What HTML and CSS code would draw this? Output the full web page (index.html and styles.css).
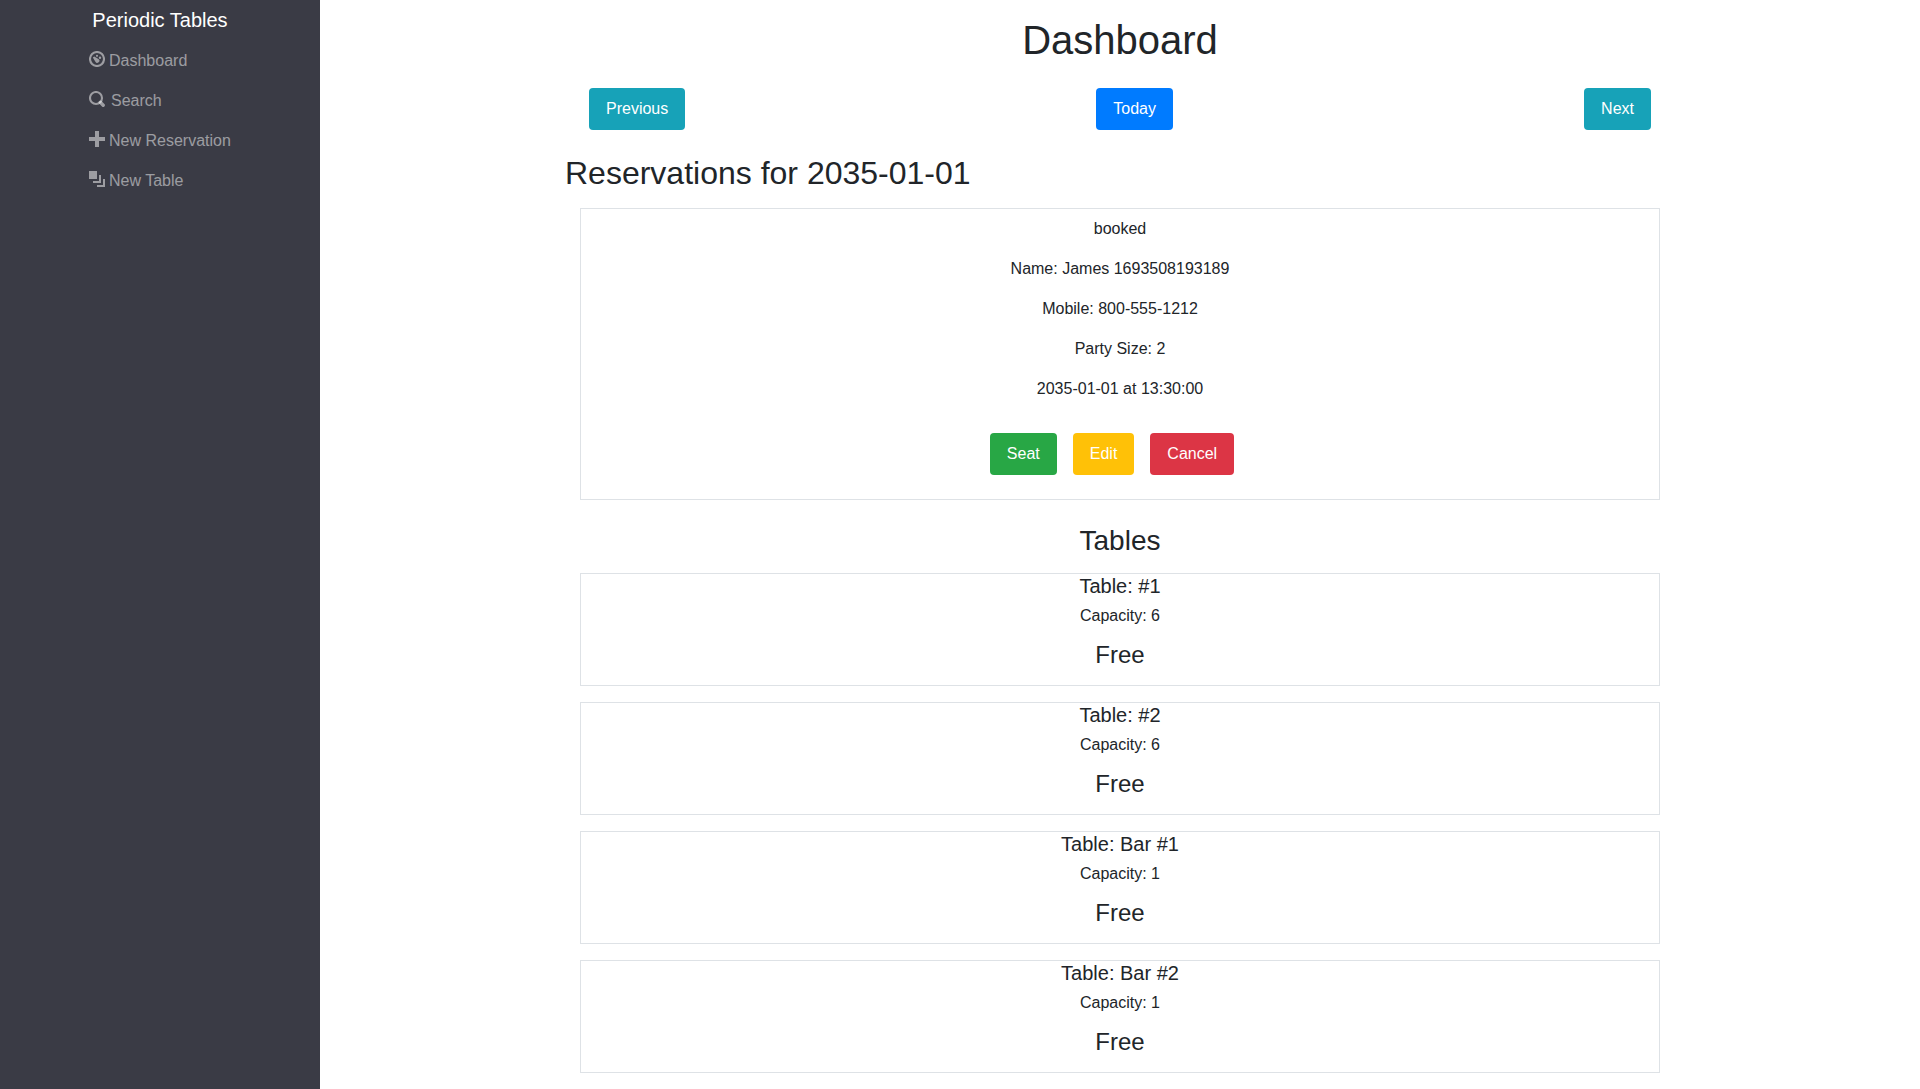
FILE: index.html
```html
<!DOCTYPE html>
<html lang="en">
<head>
<meta charset="utf-8">
<title>Periodic Tables</title>
<link rel="stylesheet" href="styles.css">
</head>
<body>
<div class="layout">
  <nav class="sidebar">
    <div class="brand">Periodic Tables</div>
    <ul class="menu">
      <li><svg class="icon" viewBox="0 0 16 16"><circle cx="8" cy="8" r="7" fill="none" stroke="currentColor" stroke-width="2.1"/><path d="M3.8 6.4l1.4-1 4.2 2.6a2.1 2.1 0 1 1-3 2.8z" fill="currentColor"/><circle cx="8" cy="4.8" r="1.1" fill="currentColor"/><circle cx="11" cy="6.8" r="1.2" fill="currentColor"/></svg><span>Dashboard</span></li>
      <li class="search"><svg class="icon" viewBox="0 0 16 16"><path d="M11.3 11.3l2.9 2.9" stroke="currentColor" stroke-width="3.4" stroke-linecap="round"/><circle cx="7" cy="7" r="6" fill="none" stroke="currentColor" stroke-width="2.1"/></svg><span>Search</span></li>
      <li><svg class="icon" viewBox="0 0 16 16"><path d="M6 0h4v6h6v4h-6v6H6v-6H0V6h6z" fill="currentColor"/></svg><span>New Reservation</span></li>
      <li><svg class="icon" viewBox="0 0 16 16"><path d="M0 0h8v8H0zM10 4h2v8H4v-2h6zM14 8h2v8H8v-2h6z" fill="currentColor"/></svg><span>New Table</span></li>
    </ul>
  </nav>
  <main class="content">
    <h1>Dashboard</h1>
    <div class="pager">
      <button class="btn info">Previous</button>
      <button class="btn primary">Today</button>
      <button class="btn info">Next</button>
    </div>
    <h2>Reservations for 2035-01-01</h2>
    <section class="card reservation">
      <p>booked</p>
      <p>Name: James 1693508193189</p>
      <p>Mobile: 800-555-1212</p>
      <p>Party Size: 2</p>
      <p>2035-01-01 at 13:30:00</p>
      <div class="actions">
        <button class="btn success">Seat</button>
        <button class="btn warning">Edit</button>
        <button class="btn danger">Cancel</button>
      </div>
    </section>
    <h3>Tables</h3>
    <section class="card table"><h5>Table: #1</h5><p>Capacity: 6</p><h4>Free</h4></section>
    <section class="card table"><h5>Table: #2</h5><p>Capacity: 6</p><h4>Free</h4></section>
    <section class="card table"><h5>Table: Bar #1</h5><p>Capacity: 1</p><h4>Free</h4></section>
    <section class="card table"><h5>Table: Bar #2</h5><p>Capacity: 1</p><h4>Free</h4></section>
  </main>
</div>
</body>
</html>
```
FILE: styles.css
```css
* { box-sizing: border-box; }
body { margin: 0; font: 16px/1.5 "Liberation Sans", Arial, sans-serif; color: #212529; background: #fff; }
h1, h2, h3, h4, h5, p { margin: 0; font-weight: 500; line-height: 1.2; }
.layout { display: flex; height: 1089px; overflow: hidden; }
.sidebar { width: 320px; flex: none; background: #3a3b45; color: #fff; }
.brand { font-size: 20px; line-height: 40px; text-align: center; }
.menu { list-style: none; margin: 0; padding: 0 0 0 89px; color: rgba(255,255,255,.5); }
.menu li { display: flex; height: 40px; padding-top: 9px; gap: 4px; line-height: 24px; }
.menu .search { gap: 6px; }
.icon { width: 16px; height: 16px; margin-top: 2px; }
.content { flex: 1; padding: 16px 245px 0; text-align: center; }
h1 { font-size: 40px; line-height: 48px; margin-bottom: 24px; }
.pager { display: flex; justify-content: space-between; padding: 0 24px; }
.btn { height: 42px; padding: 0 17px; border: 0; border-radius: 4px; font: inherit; color: #fff; }
.info { background: #17a2b8; }
.primary { background: #007bff; }
.success { background: #28a745; }
.warning { background: #ffc107; }
.danger { background: #dc3545; }
h2 { font-size: 32px; line-height: 38px; margin: 24px 0 16px; text-align: left; }
.card { margin: 0 15px 16px; border: 1px solid #dee2e6; }
.reservation { height: 292px; padding-top: 8px; margin-bottom: 24px; }
.reservation p { line-height: 24px; margin-bottom: 16px; }
.actions { display: flex; justify-content: center; gap: 16px; padding: 16px 16px 0 0; }
h3 { font-size: 28px; line-height: 33px; margin-bottom: 16px; }
.table { height: 113px; }
h5 { font-size: 20px; line-height: 24px; margin-bottom: 6px; }
.table p { line-height: 24px; margin-bottom: 12px; }
h4 { font-size: 24px; line-height: 29px; }
```
